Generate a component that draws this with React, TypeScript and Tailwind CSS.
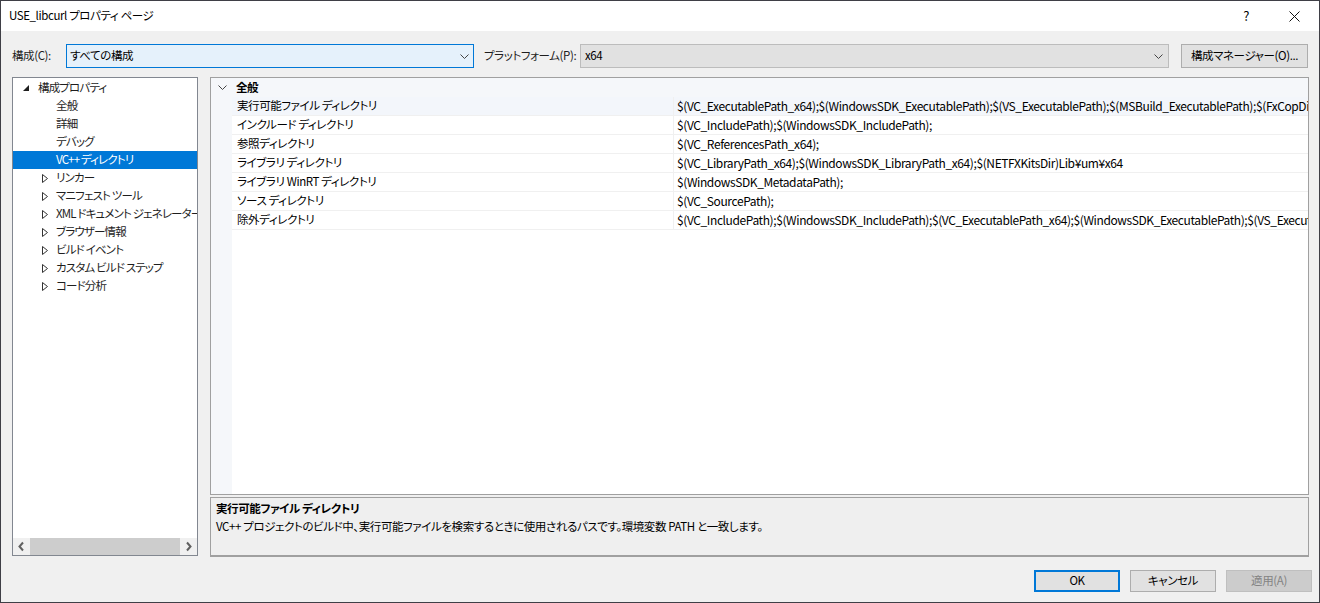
import React from 'react';

const font = { fontFamily: '"Noto Sans CJK JP", "Noto Sans", sans-serif' };

const treeItems: { label: string; level: number; kind: 'open' | 'closed' | 'leaf'; selected?: boolean }[] = [
  { label: '構成プロパティ', level: 0, kind: 'open' },
  { label: '全般', level: 1, kind: 'leaf' },
  { label: '詳細', level: 1, kind: 'leaf' },
  { label: 'デバッグ', level: 1, kind: 'leaf' },
  { label: 'VC++ ディレクトリ', level: 1, kind: 'leaf', selected: true },
  { label: 'リンカー', level: 1, kind: 'closed' },
  { label: 'マニフェスト ツール', level: 1, kind: 'closed' },
  { label: 'XML ドキュメント ジェネレーター', level: 1, kind: 'closed' },
  { label: 'ブラウザー情報', level: 1, kind: 'closed' },
  { label: 'ビルド イベント', level: 1, kind: 'closed' },
  { label: 'カスタム ビルド ステップ', level: 1, kind: 'closed' },
  { label: 'コード分析', level: 1, kind: 'closed' },
];

const props = [
  ['実行可能ファイル ディレクトリ', '$(VC_ExecutablePath_x64);$(WindowsSDK_ExecutablePath);$(VS_ExecutablePath);$(MSBuild_ExecutablePath);$(FxCopDir);$(PATH);'],
  ['インクルード ディレクトリ', '$(VC_IncludePath);$(WindowsSDK_IncludePath);'],
  ['参照ディレクトリ', '$(VC_ReferencesPath_x64);'],
  ['ライブラリ ディレクトリ', '$(VC_LibraryPath_x64);$(WindowsSDK_LibraryPath_x64);$(NETFXKitsDir)Lib¥um¥x64'],
  ['ライブラリ WinRT ディレクトリ', '$(WindowsSDK_MetadataPath);'],
  ['ソース ディレクトリ', '$(VC_SourcePath);'],
  ['除外ディレクトリ', '$(VC_IncludePath);$(WindowsSDK_IncludePath);$(VC_ExecutablePath_x64);$(WindowsSDK_ExecutablePath);$(VS_ExecutablePath);'],
];

function Chevron() {
  return (
    <svg width="9" height="5" viewBox="0 0 9 5" className="shrink-0">
      <path d="M0.5 0.5 L4.5 4.5 L8.5 0.5" fill="none" stroke="#444" strokeWidth="1" />
    </svg>
  );
}

function TreeRow({ label, level, kind, selected }: (typeof treeItems)[number]) {
  return (
    <div
      className={`flex h-[18px] items-center whitespace-nowrap ${selected ? 'bg-[#0078d7] text-white' : 'text-[#1e1e1e]'}`}
    >
      <div className={`flex w-[11px] shrink-0 justify-center ${level === 0 ? 'ml-[7px] mr-[7px]' : 'ml-[26px] mr-[6px]'}`}>
        {kind === 'open' && (
          <svg width="6" height="6" viewBox="0 0 6 6">
            <polygon points="6,0 6,6 0,6" fill="#1e1e1e" />
          </svg>
        )}
        {kind === 'closed' && (
          <svg width="6" height="9" viewBox="0 0 6 9">
            <polygon points="0.5,0.5 5.5,4.5 0.5,8.5" fill="none" stroke="#333" strokeWidth="1" />
          </svg>
        )}
      </div>
      <span className="tracking-[-0.85px]">{label}</span>
    </div>
  );
}

export default function App() {
  return (
    <div
      className="flex h-[603px] w-[1320px] flex-col overflow-hidden border border-[#3f3f46] bg-[#f0f0f0] text-[11.5px] tracking-[-0.4px] text-[#1e1e1e] [font-feature-settings:'palt']"
      style={font}
    >
      {/* title bar */}
      <div className="flex h-[30px] shrink-0 items-center bg-white pl-[8px]">
        <span className="text-black">USE_libcurl プロパティ ページ</span>
        <span className="ml-auto mr-[40px] text-[13px] text-black">?</span>
        <svg width="11" height="11" viewBox="0 0 11 11" className="mr-[19px]">
          <path d="M0.5 0.5 L10.5 10.5 M10.5 0.5 L0.5 10.5" stroke="#111" strokeWidth="1" />
        </svg>
      </div>

      {/* configuration row */}
      <div className="mt-[13px] flex h-[24px] shrink-0 items-center whitespace-nowrap pl-[11px] pr-[11px]">
        <span className="w-[54px]">構成(C):</span>
        <div className="flex h-[24px] w-[408px] items-center border border-[#0078d7] bg-[#e5f1fb] pl-[3px] pr-[4px]">
          <span className="text-black">すべての構成</span>
          <span className="ml-auto"><Chevron /></span>
        </div>
        <span className="ml-[10px] w-[96px]">プラットフォーム(P):</span>
        <div className="flex h-[24px] w-[589px] items-center border border-[#bcbcbc] bg-[#e1e1e1] pl-[4px] pr-[5px]">
          <span className="text-black">x64</span>
          <span className="ml-auto"><Chevron /></span>
        </div>
        <div className="ml-[12px] flex h-[24px] w-[127px] items-center justify-center border border-[#adadad] bg-[#e1e1e1] text-black">
          構成マネージャー(O)...
        </div>
      </div>

      {/* main area */}
      <div className="mt-[9px] flex shrink-0 pl-[11px]">
        {/* tree */}
        <div className="flex h-[479px] w-[186px] shrink-0 flex-col border border-[#828790] bg-white">
          <div className="flex-1 overflow-hidden pt-[1px]">
            {treeItems.map((t) => (
              <TreeRow key={t.label} {...t} />
            ))}
          </div>
          <div className="flex h-[17px] items-center bg-[#f0f0f0]">
            <svg width="17" height="17" viewBox="0 0 17 17" className="shrink-0">
              <path d="M10 4.5 L6.5 8.5 L10 12.5" fill="none" stroke="#606060" strokeWidth="2" />
            </svg>
            <div className="h-[17px] flex-1 bg-[#cdcdcd]" />
            <svg width="17" height="17" viewBox="0 0 17 17" className="shrink-0">
              <path d="M7 4.5 L10.5 8.5 L7 12.5" fill="none" stroke="#606060" strokeWidth="2" />
            </svg>
          </div>
        </div>

        <div className="ml-[12px] flex w-[1099px] flex-col">
          {/* property grid */}
          <div className="flex h-[418px] border border-[#a0a0a0] bg-white">
            <div className="w-[21px] shrink-0 bg-[#f5f7fa]" />
            <div className="flex min-w-0 flex-1 flex-col">
              <div className="-ml-[21px] flex h-[19px] items-center bg-[#f5f7fa] pl-[7px]">
                <Chevron />
                <span className="ml-[9px] font-bold text-black">全般</span>
              </div>
              {props.map(([name, value], i) => (
                <div
                  key={name}
                  className={`flex h-[19px] items-center border-b border-[#f0f0f0] ${i === 0 ? 'bg-[#f3f6fb]' : 'bg-white'}`}
                >
                  <span className="w-[441px] shrink-0 whitespace-nowrap pl-[5px] text-black">{name}</span>
                  <span className="min-w-0 flex-1 overflow-hidden whitespace-nowrap border-l border-[#f0f0f0] pl-[3px] text-[12px] tracking-[-0.4px] text-black">
                    {value}
                  </span>
                </div>
              ))}
            </div>
          </div>

          {/* description */}
          <div className="mt-[2px] h-[60px] border border-b-2 border-[#a0a0a0] bg-[#efefef] pl-[5px] pt-[1px]">
            <div className="h-[18px] leading-[18px] font-bold text-black">実行可能ファイル ディレクトリ</div>
            <div className="h-[18px] leading-[18px] text-black">
              VC++ プロジェクトのビルド中、実行可能ファイルを検索するときに使用されるパスです。環境変数 PATH と一致します。
            </div>
          </div>
        </div>
      </div>

      {/* footer buttons */}
      <div className="mt-[13px] flex shrink-0 justify-end gap-[10px] pr-[7px]">
        <button className="h-[22px] w-[86px] border-2 border-[#0078d7] bg-[#e1e1e1] text-black">OK</button>
        <button className="h-[22px] w-[86px] border border-[#adadad] bg-[#e1e1e1] text-black">キャンセル</button>
        <button className="h-[22px] w-[86px] border border-[#bfbfbf] bg-[#cccccc] text-[#838383]">適用(A)</button>
      </div>
    </div>
  );
}
